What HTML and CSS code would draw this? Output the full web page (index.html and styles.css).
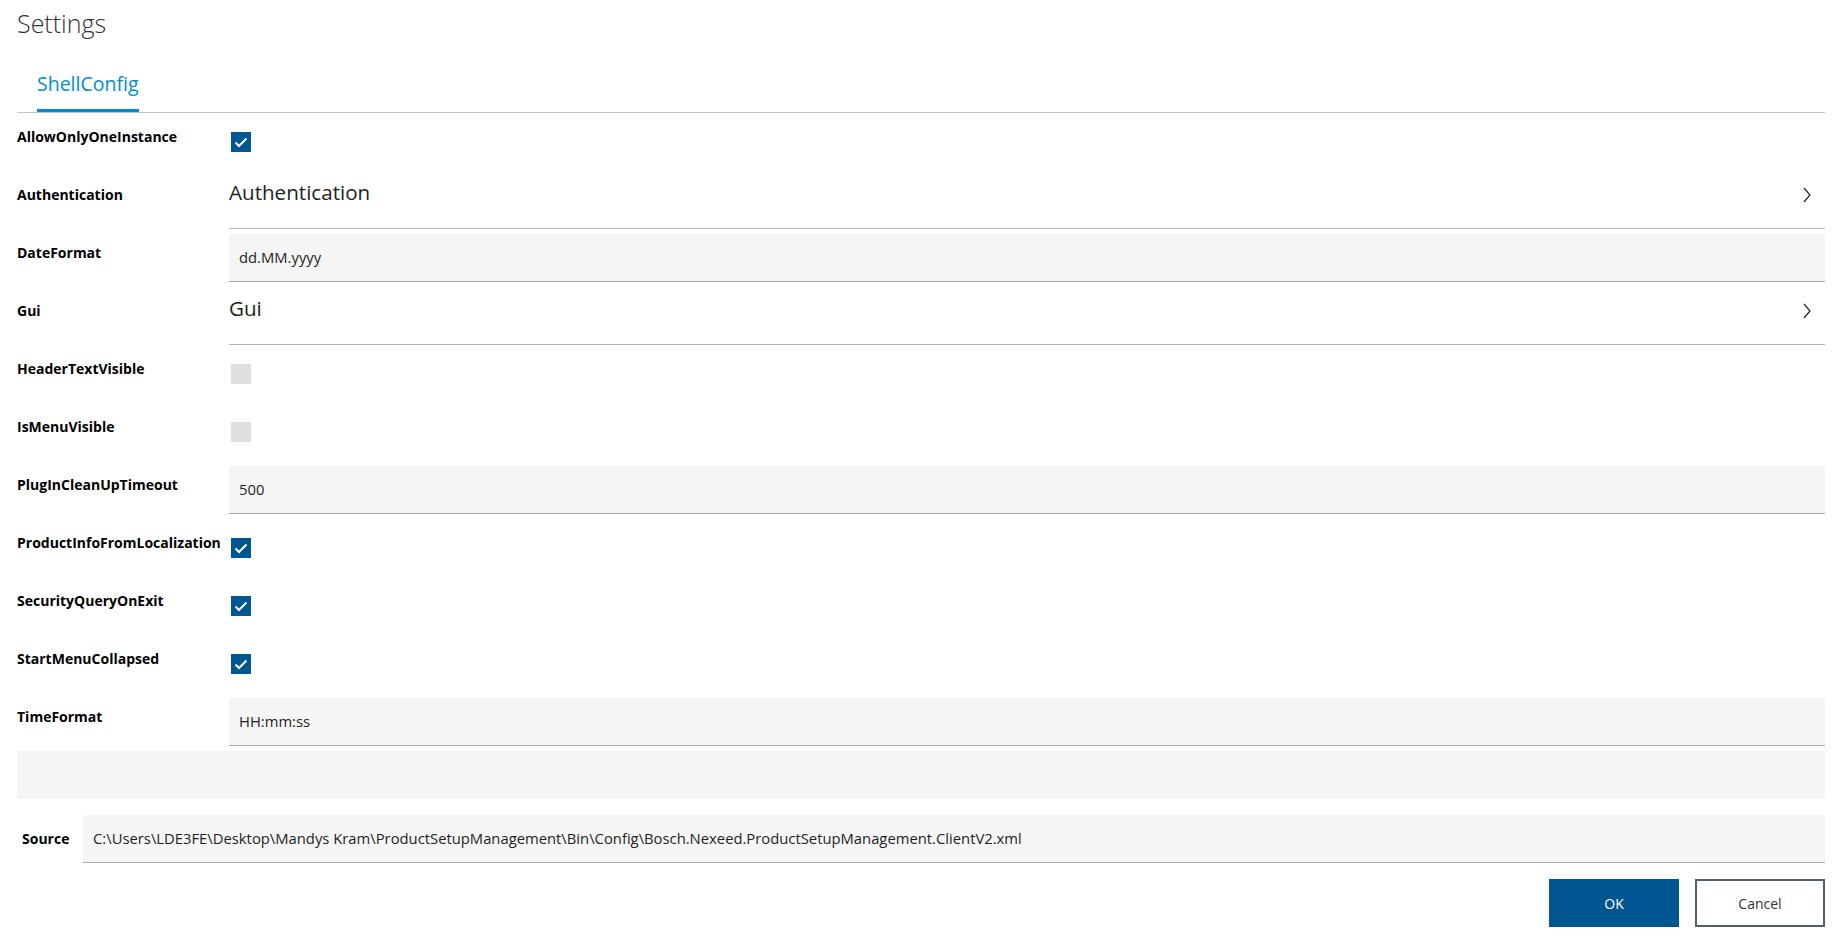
FILE: index.html
```html
<!DOCTYPE html>
<html>
<head>
	<title>Settings</title>
	<meta charset="utf-8"/>
	<link rel="stylesheet" href="styles.css">
</head>
<body>
	<div class="page">
		<div class="title">Settings</div>
		<div class="tabs">
			<div class="tab active">ShellConfig</div>
		</div>
		<div class="form">
			<div class="row">
				<div class="label">AllowOnlyOneInstance</div>
				<div class="check on"><svg width="20" height="20" viewBox="0 0 20 20"><path d="M4.5 10.5l3.5 3.5l7.5-7.5" fill="none" stroke="#fff" stroke-width="2"/></svg></div>
			</div>
			<div class="row">
				<div class="label">Authentication</div>
				<div class="link">
					<span>Authentication</span>
					<svg width="8" height="16" viewBox="0 0 8 16"><path d="M1 1l6 7l-6 7" fill="none" stroke="#222" stroke-width="1.2"/></svg>
				</div>
			</div>
			<div class="row">
				<div class="label">DateFormat</div>
				<div class="input">dd.MM.yyyy</div>
			</div>
			<div class="row">
				<div class="label">Gui</div>
				<div class="link">
					<span>Gui</span>
					<svg width="8" height="16" viewBox="0 0 8 16"><path d="M1 1l6 7l-6 7" fill="none" stroke="#222" stroke-width="1.2"/></svg>
				</div>
			</div>
			<div class="row">
				<div class="label">HeaderTextVisible</div>
				<div class="check"></div>
			</div>
			<div class="row">
				<div class="label">IsMenuVisible</div>
				<div class="check"></div>
			</div>
			<div class="row">
				<div class="label">PlugInCleanUpTimeout</div>
				<div class="input">500</div>
			</div>
			<div class="row">
				<div class="label">ProductInfoFromLocalization</div>
				<div class="check on"><svg width="20" height="20" viewBox="0 0 20 20"><path d="M4.5 10.5l3.5 3.5l7.5-7.5" fill="none" stroke="#fff" stroke-width="2"/></svg></div>
			</div>
			<div class="row">
				<div class="label">SecurityQueryOnExit</div>
				<div class="check on"><svg width="20" height="20" viewBox="0 0 20 20"><path d="M4.5 10.5l3.5 3.5l7.5-7.5" fill="none" stroke="#fff" stroke-width="2"/></svg></div>
			</div>
			<div class="row">
				<div class="label">StartMenuCollapsed</div>
				<div class="check on"><svg width="20" height="20" viewBox="0 0 20 20"><path d="M4.5 10.5l3.5 3.5l7.5-7.5" fill="none" stroke="#fff" stroke-width="2"/></svg></div>
			</div>
			<div class="row">
				<div class="label">TimeFormat</div>
				<div class="input">HH:mm:ss</div>
			</div>
		</div>
		<div class="empty"></div>
		<div class="source">
			<div class="label">Source</div>
			<div class="input">C:\Users\LDE3FE\Desktop\Mandys Kram\ProductSetupManagement\Bin\Config\Bosch.Nexeed.ProductSetupManagement.ClientV2.xml</div>
		</div>
		<div class="buttons">
			<button class="btn primary">OK</button>
			<button class="btn">Cancel</button>
		</div>
	</div>
</body>
</html>
```

FILE: styles.css
```css
body{
	margin: 0;
	font-family: "Open Sans", "Liberation Sans", sans-serif;
	color: #000;
	background-color: #fff;
}
.page{
	padding: 0 11px 0 17px;
}
.title{
	font-size: 25px;
	font-weight: 300;
	line-height: 32px;
	padding-top: 7px;
	color: #333;
}
.tabs{
	display: flex;
	padding-top: 33px;
	border-bottom: 1px solid #c1c4c6;
}
.tab{
	margin-left: 20px;
	font-size: 19.5px;
	line-height: 24px;
	padding-bottom: 13px;
	color: #008ecf;
}
.tab.active{
	border-bottom: 3px solid #008ecf;
}
.row{
	display: flex;
	height: 58px;
}
.label{
	flex: none;
	width: 212px;
	box-sizing: border-box;
	padding-top: 14px;
	font-size: 14px;
	font-weight: 700;
	line-height: 20px;
	white-space: nowrap;
}
.check{
	width: 20px;
	height: 20px;
	margin: 19px 0 0 2px;
	background-color: #dfdfdf;
}
.check svg{
	display: block;
}
.check.on{
	background-color: #005691;
}
.input{
	flex: 1;
	height: 48px;
	margin-top: 5px;
	box-sizing: border-box;
	padding: 13px 10px 0;
	background-color: #f5f5f5;
	border-bottom: 1px solid #a8acaf;
	font-size: 14.8px;
	line-height: 20px;
	color: #1f1f1f;
}
.link{
	flex: 1;
	display: flex;
	justify-content: space-between;
	align-items: flex-start;
	box-sizing: border-box;
	padding: 9px 14px 0 0;
	border-bottom: 1px solid #b2b5b8;
	font-size: 20.6px;
	line-height: 24px;
	color: #222;
}
.link svg{
	margin-top: 7px;
}
.empty{
	height: 48px;
	background-color: #f5f5f5;
}
.source{
	display: flex;
	margin-top: 16px;
}
.source .label{
	width: 61px;
	margin-left: 5px;
}
.source .input{
	margin-top: 0;
}
.buttons{
	display: flex;
	justify-content: flex-end;
	gap: 16px;
	margin-top: 16px;
}
.btn{
	width: 130px;
	height: 48px;
	font-family: inherit;
	font-size: 14px;
	color: #333;
	background-color: #fff;
	border: 2px solid #525f6b;
	cursor: pointer;
}
.btn.primary{
	color: #fff;
	background-color: #005691;
	border: none;
}
```
